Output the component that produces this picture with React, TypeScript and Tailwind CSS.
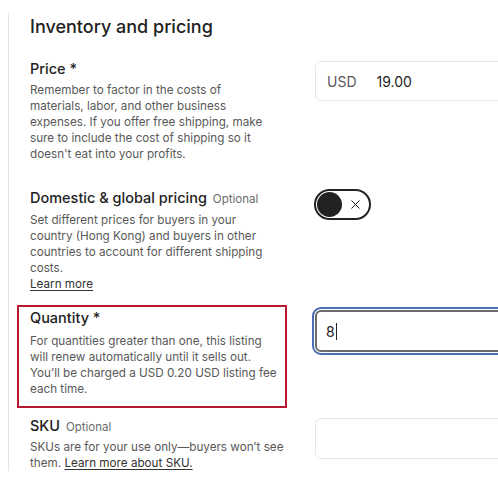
import { X } from "lucide-react";

const font = { fontFamily: "Inter, 'Liberation Sans', sans-serif" };

function Desc({ children, className = "" }: { children: React.ReactNode; className?: string }) {
  return (
    <p className={`text-[11.7px] leading-[16px] text-[#595959] ${className}`}>{children}</p>
  );
}

export default function App() {
  return (
    <div className="h-[477px] w-[498px] overflow-hidden bg-white pt-[13px]" style={font}>
      <div className="ml-2 w-[600px] border-l border-[#e3e3e3] pl-2 text-[#222222]">
        {/* heading */}
        <h2 className="pl-[13px] text-[18px] font-medium leading-[28px]">Inventory and pricing</h2>

        {/* price */}
        <div className="mt-[18px] flex">
          <div className="w-[270px] pl-[13px] pr-[9px]">
            <div className="text-[14.5px] font-medium leading-[20px]">Price *</div>
            <Desc className="mt-[3px]">
              Remember to factor in the costs of
              <br />
              materials, labor, and other business expenses. If you offer free shipping, make sure to
              include the cost of shipping so it doesn't eat into your profits.
            </Desc>
          </div>
          <div className="ml-[28px] mt-[2px] w-[260px]">
            <div className="flex h-[40px] items-center rounded-md border border-[#e5e5e5] px-[11px] text-[14px]">
              <span className="text-[#595959]">USD</span>
              <span className="ml-[20px]">19.00</span>
            </div>
          </div>
        </div>

        {/* domestic & global */}
        <div className="mt-[26px] flex">
          <div className="w-[270px] pl-[13px] pr-[9px]">
            <div className="text-[14.5px] font-medium leading-[20px]">
              Domestic &amp; global pricing{" "}
              <span className="ml-[2px] text-[11.5px] font-normal text-[#6b6b6b]">Optional</span>
            </div>
            <Desc className="mt-[3px]">
              Set different prices for buyers in your
              <br />
              country (Hong Kong) and buyers in other countries to account for different shipping
              costs.
              <br />
              <span className="text-[#333333] underline underline-offset-2">Learn more</span>
            </Desc>
          </div>
          <div className="ml-[27px] mt-[1px]">
            <div className="flex h-[31px] w-[57px] items-center rounded-full border-2 border-[#222222] px-[1px]">
              <span className="h-[25px] w-[25px] rounded-full bg-[#222222]" />
              <X className="ml-[6px] h-[15px] w-[15px] text-[#222222]" strokeWidth={1.6} />
            </div>
          </div>
        </div>

        {/* quantity */}
        <div className="mt-[13px] flex">
          <div className="w-[270px] border-2 border-[#b8172f] pb-[9px] pl-[11px] pr-[7px] pt-[1px]">
            <div className="text-[14.5px] font-medium leading-[20px]">Quantity *</div>
            <Desc className="mt-[5px]">
              For quantities greater than one, this listing will renew automatically until it sells out.
              You’ll be charged a USD 0.20 USD listing fee each time.
            </Desc>
          </div>
          <div className="ml-[25px] mt-[2px] w-[260px]">
            <div className="rounded-[9px] border-2 border-[#4a6db4] p-px">
              <div className="flex h-[42px] items-center rounded-md border-2 border-[#6b6b6b] px-[9px] text-[14px]">
                <span>8</span>
                <span className="ml-px h-[17px] w-px bg-[#222222]" />
              </div>
            </div>
          </div>
        </div>

        {/* sku */}
        <div className="mt-[8px] flex">
          <div className="w-[270px] pl-[13px] pr-[9px]">
            <div className="text-[14.5px] font-medium leading-[20px]">
              SKU <span className="ml-[2px] text-[11.5px] font-normal text-[#6b6b6b]">Optional</span>
            </div>
            <Desc className="mt-[2px]">
              <span className="whitespace-nowrap">SKUs are for your use only—buyers won’t see</span>
              <br />
              them.{" "}
              <span className="text-[#333333] underline underline-offset-2">Learn more about SKU.</span>
            </Desc>
          </div>
          <div className="ml-[28px] mt-[2px] w-[260px]">
            <div className="h-[41px] rounded-md border border-[#e5e5e5]" />
          </div>
        </div>
      </div>
    </div>
  );
}
